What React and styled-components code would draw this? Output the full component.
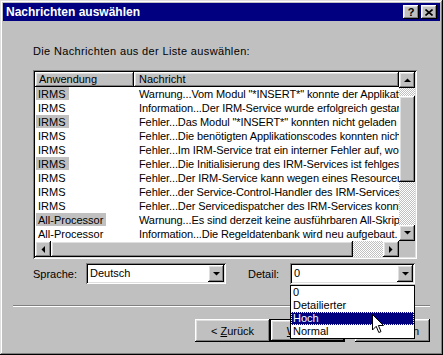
import React from "react"
import styled, { createGlobalStyle, css } from "styled-components"

const GlobalStyle = createGlobalStyle`
  html, body { margin: 0; padding: 0; background: #c0c0c0; }
  body { font-family: "Liberation Sans", Arial, sans-serif; font-size: 11px; color: #000; }
  * { box-sizing: border-box; }
`

const raised = css`
  background: #c0c0c0;
  box-shadow: inset -1px -1px #000, inset 1px 1px #fff, inset -2px -2px #808080, inset 2px 2px #dfdfdf;
`
const sunken = css`
  box-shadow: inset 1px 1px #808080, inset -1px -1px #fff, inset 2px 2px #000, inset -2px -2px #dfdfdf;
`
const dither = css`
  background: repeating-conic-gradient(#fff 0 25%, #c0c0c0 0 50%) 0 0 / 2px 2px;
`

const Window = styled.div`
  position: relative;
  width: 443px;
  height: 355px;
  padding: 3px;
  background: #c0c0c0;
  box-shadow: inset -1px -1px #000, inset 1px 1px #dfdfdf, inset -2px -2px #808080, inset 2px 2px #fff;
  display: flex;
  flex-direction: column;
`

const TitleBar = styled.div`
  height: 18px;
  background: #000080;
  color: #fff;
  display: flex;
  align-items: center;
  padding: 0 3px 0 3px;
  font-weight: bold;
  font-size: 12px;
`

const TitleText = styled.span`
  flex: 1;
`

const TitleButton = styled.div`
  ${raised};
  width: 16px;
  height: 14px;
  margin-left: 2px;
  color: #000;
  display: flex;
  align-items: center;
  justify-content: center;
  font-size: 11px;
  font-weight: bold;
  line-height: 1;
`

const Content = styled.div`
  flex: 1;
  padding: 0 10px;
  display: flex;
  flex-direction: column;
`

const Intro = styled.div`
  margin: 24px 0 0 20px;
  line-height: 13px;
  letter-spacing: 0.35px;
`

const ListBox = styled.div`
  ${sunken};
  background: #fff;
  margin: 12px 0 0 20px;
  width: 384px;
  height: 189px;
  padding: 2px;
  display: grid;
  grid-template-columns: 1fr 16px;
  grid-template-rows: 1fr 16px;
`

const ListArea = styled.div`
  overflow: hidden;
  display: flex;
  flex-direction: column;
`

const Header = styled.div`
  display: flex;
  height: 15px;
  flex-shrink: 0;
`

const HeaderCell = styled.div`
  ${raised};
  width: ${(p) => (p.$w ? `${p.$w}px` : "auto")};
  flex: ${(p) => (p.$w ? "none" : 1)};
  padding: 0 0 0 ${(p) => p.$pad}px;
  line-height: 15px;
  white-space: nowrap;
  overflow: hidden;
`

const Row = styled.div`
  display: flex;
  height: 14px;
  line-height: 14px;
  white-space: nowrap;
`

const AppCell = styled.div`
  width: 99px;
  flex: none;
  padding-left: 1px;
`

const AppName = styled.span`
  display: inline-block;
  padding: 0 3px 0 2px;
  height: 13px;
  line-height: 14px;
  background: ${(p) => (p.$marked ? "#c0c0c0" : "transparent")};
`

const MsgCell = styled.div`
  flex: 1;
  overflow: hidden;
  padding-left: 5px;
  letter-spacing: -0.1px;
`

const VScroll = styled.div`
  display: flex;
  flex-direction: column;
  ${dither};
`

const HScroll = styled.div`
  display: flex;
  ${dither};
`

const Corner = styled.div`
  background: #c0c0c0;
`

const ScrollButton = styled.div`
  ${raised};
  width: 16px;
  height: 16px;
  flex: none;
  display: flex;
  align-items: center;
  justify-content: center;
`

const Thumb = styled.div`
  ${raised};
  flex: none;
  ${(p) => (p.$vertical ? `height: ${p.$size}px; margin-top: ${p.$offset}px;` : `width: ${p.$size}px; margin-left: ${p.$offset}px;`)}
`

const Spacer = styled.div`
  flex: 1;
`

const FormRow = styled.div`
  margin: 4px 0 0 20px;
  height: 21px;
  display: flex;
  align-items: center;
`

const FieldLabel = styled.div`
  width: ${(p) => p.$w}px;
  margin-left: ${(p) => p.$ml || 0}px;
  flex: none;
`

const ComboWrap = styled.div`
  position: relative;
  width: ${(p) => p.$w}px;
  height: 21px;
  flex: none;
`

const Combo = styled.div`
  ${sunken};
  background: #fff;
  height: 100%;
  padding: 2px;
  display: flex;
  align-items: stretch;
`

const ComboValue = styled.div`
  flex: 1;
  padding-left: 2px;
  line-height: 17px;
`

const ComboButton = styled(ScrollButton)`
  height: 17px;
`

const DropList = styled.div`
  position: absolute;
  top: 22px;
  left: 0;
  width: 100%;
  background: #fff;
  border: 1px solid #000;
  z-index: 2;
`

const DropItem = styled.div`
  height: 13px;
  line-height: 13px;
  padding-left: 2px;
  background: ${(p) => (p.$active ? "#000080" : "#fff")};
  color: ${(p) => (p.$active ? "#fff" : "#000")};
  outline: ${(p) => (p.$active ? "1px dotted #ffff80" : "none")};
  outline-offset: -1px;
`

const Separator = styled.div`
  margin-top: 21px;
  height: 2px;
  border-top: 1px solid #808080;
  border-bottom: 1px solid #fff;
`

const ButtonRow = styled.div`
  margin-top: 12px;
  display: flex;
  justify-content: flex-end;
`

const Button = styled.div`
  ${raised};
  width: 75px;
  height: 23px;
  margin-left: ${(p) => p.$ml || 0}px;
  display: flex;
  align-items: center;
  justify-content: center;
  ${(p) =>
    p.$default &&
    css`
      box-shadow: inset 0 0 0 1px #000, inset -2px -2px #000, inset 2px 2px #fff, inset -3px -3px #808080,
        inset 3px 3px #dfdfdf;
    `}
`

const Key = styled.span`
  text-decoration: underline;
`

const Pointer = styled.svg`
  position: absolute;
  left: 372px;
  top: 314px;
  z-index: 3;
`

function Arrow({ dir }) {
  const pts = {
    up: "0,4 7,4 3.5,0.5",
    down: "0,0 7,0 3.5,3.5",
    left: "4,0 4,7 0.5,3.5",
    right: "0,0 0,7 3.5,3.5",
  }
  const vertical = dir === "up" || dir === "down"
  return (
    <svg width={vertical ? 7 : 4} height={vertical ? 4 : 7} viewBox={vertical ? "0 0 7 4" : "0 0 4 7"}>
      <polygon points={pts[dir]} fill="#000" />
    </svg>
  )
}

const rows = [
  ["IRMS", true, 'Warnung...Vom Modul "*INSERT*" konnte der Applikationscode nicht ermittelt werden'],
  ["IRMS", false, "Information...Der IRM-Service wurde erfolgreich gestartet"],
  ["IRMS", true, 'Fehler...Das Modul "*INSERT*" konnten nicht geladen werden'],
  ["IRMS", false, "Fehler...Die benötigten Applikationscodes konnten nicht ermittelt werden"],
  ["IRMS", false, "Fehler...Im IRM-Service trat ein interner Fehler auf, worauf"],
  ["IRMS", true, "Fehler...Die Initialisierung des IRM-Services ist fehlgeschlagen"],
  ["IRMS", false, "Fehler...Der IRM-Service kann wegen eines Resourcenmangels"],
  ["IRMS", false, "Fehler...der Service-Control-Handler des IRM-Services konnte"],
  ["IRMS", false, "Fehler...Der Servicedispatcher des IRM-Services konnte nicht"],
  ["All-Processor", true, "Warnung...Es sind derzeit keine ausführbaren All-Skripte"],
  ["All-Processor", false, "Information...Die Regeldatenbank wird neu aufgebaut."],
]

const details = ["0", "Detailierter", "Hoch", "Normal"]

export default function App() {
  return (
    <>
      <GlobalStyle />
      <Window>
        <TitleBar>
          <TitleText>Nachrichten auswählen</TitleText>
          <TitleButton>?</TitleButton>
          <TitleButton>
            <svg width="8" height="7" viewBox="0 0 8 7">
              <path d="M0.5 0.5 L7.5 6.5 M7.5 0.5 L0.5 6.5" stroke="#000" strokeWidth="1.6" />
            </svg>
          </TitleButton>
        </TitleBar>
        <Content>
          <Intro>Die Nachrichten aus der Liste auswählen:</Intro>
          <ListBox>
            <ListArea>
              <Header>
                <HeaderCell $w={99} $pad={4}>Anwendung</HeaderCell>
                <HeaderCell $pad={5}>Nachricht</HeaderCell>
              </Header>
              {rows.map(([app, marked, msg], i) => (
                <Row key={i}>
                  <AppCell>
                    <AppName $marked={marked}>{app}</AppName>
                  </AppCell>
                  <MsgCell>{msg}</MsgCell>
                </Row>
              ))}
            </ListArea>
            <VScroll>
              <ScrollButton>
                <Arrow dir="up" />
              </ScrollButton>
              <Thumb $vertical $size={86} $offset={8} />
              <Spacer />
              <ScrollButton>
                <Arrow dir="down" />
              </ScrollButton>
            </VScroll>
            <HScroll>
              <ScrollButton>
                <Arrow dir="left" />
              </ScrollButton>
              <Thumb $size={302} $offset={0} />
              <Spacer />
              <ScrollButton>
                <Arrow dir="right" />
              </ScrollButton>
            </HScroll>
            <Corner />
          </ListBox>
          <FormRow>
            <FieldLabel $w={53}>Sprache:</FieldLabel>
            <ComboWrap $w={140}>
              <Combo>
                <ComboValue>Deutsch</ComboValue>
                <ComboButton>
                  <Arrow dir="down" />
                </ComboButton>
              </Combo>
            </ComboWrap>
            <FieldLabel $w={42} $ml={22}>Detail:</FieldLabel>
            <ComboWrap $w={125}>
              <Combo>
                <ComboValue>0</ComboValue>
                <ComboButton>
                  <Arrow dir="down" />
                </ComboButton>
              </Combo>
              <DropList>
                {details.map((d) => (
                  <DropItem key={d} $active={d === "Hoch"}>
                    {d}
                  </DropItem>
                ))}
              </DropList>
            </ComboWrap>
          </FormRow>
          <Separator />
          <ButtonRow>
            <Button>
              &lt;&nbsp;<Key>Z</Key>urück
            </Button>
            <Button $default>
              <Key>W</Key>eiter &gt;
            </Button>
            <Button $ml={10}>Abbrechen</Button>
          </ButtonRow>
        </Content>
        <Pointer width="12" height="20" viewBox="0 0 12 20">
          <path d="M0.5 0.5 L0.5 16 L4.2 12.3 L6.8 18.5 L9 17.6 L6.4 11.5 L11.5 11.5 Z" fill="#fff" stroke="#000" strokeWidth="1" />
        </Pointer>
      </Window>
    </>
  )
}
